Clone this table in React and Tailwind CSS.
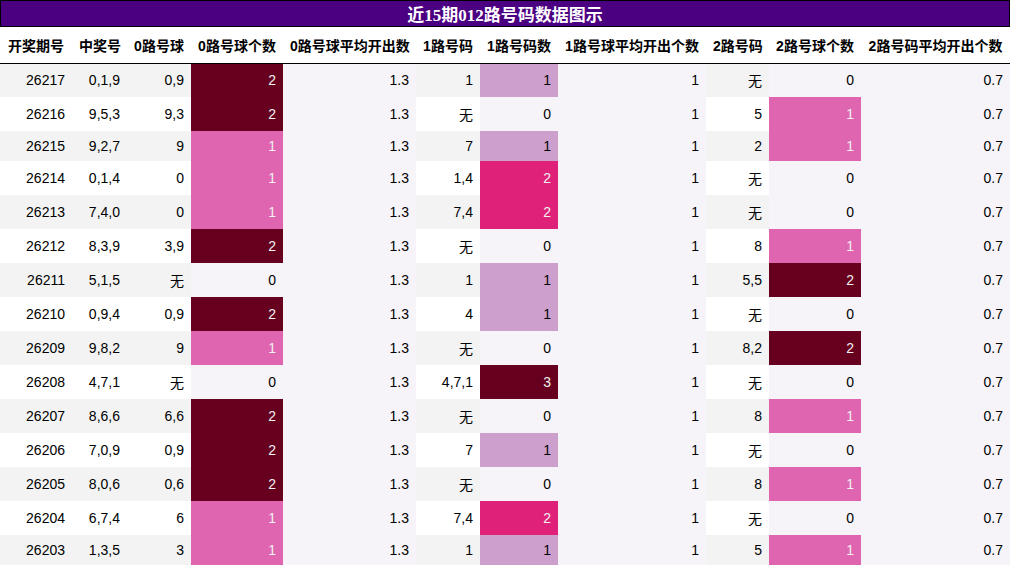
import React from 'react';

const columns = [
  { label: '开奖期号', width: 'w-[72px]' },
  { label: '中奖号', width: 'w-[55px]' },
  { label: '0路号球', width: 'w-[64px]' },
  { label: '0路号球个数', width: 'w-[92px]' },
  { label: '0路号球平均开出数', width: 'w-[133px]' },
  { label: '1路号码', width: 'w-[64px]' },
  { label: '1路号码数', width: 'w-[78px]' },
  { label: '1路号球平均开出个数', width: 'w-[148px]' },
  { label: '2路号码', width: 'w-[63px]' },
  { label: '2路号球个数', width: 'w-[92px]' },
  { label: '2路号码平均开出个数', width: 'w-[149px]' },
];

// 期号, 中奖号, 0路号球, 0路个数, 1路号码, 1路个数, 2路号码, 2路个数
const rows = [
  ['26217', '0,1,9', '0,9', 2, '1', 1, '无', 0],
  ['26216', '9,5,3', '9,3', 2, '无', 0, '5', 1],
  ['26215', '9,2,7', '9', 1, '7', 1, '2', 1],
  ['26214', '0,1,4', '0', 1, '1,4', 2, '无', 0],
  ['26213', '7,4,0', '0', 1, '7,4', 2, '无', 0],
  ['26212', '8,3,9', '3,9', 2, '无', 0, '8', 1],
  ['26211', '5,1,5', '无', 0, '1', 1, '5,5', 2],
  ['26210', '0,9,4', '0,9', 2, '4', 1, '无', 0],
  ['26209', '9,8,2', '9', 1, '无', 0, '8,2', 2],
  ['26208', '4,7,1', '无', 0, '4,7,1', 3, '无', 0],
  ['26207', '8,6,6', '6,6', 2, '无', 0, '8', 1],
  ['26206', '7,0,9', '0,9', 2, '7', 1, '无', 0],
  ['26205', '8,0,6', '0,6', 2, '无', 0, '8', 1],
  ['26204', '6,7,4', '6', 1, '7,4', 2, '无', 0],
  ['26203', '1,3,5', '3', 1, '1', 1, '5', 1],
];

// PuRd scale, max 2
function twoScale(n) {
  const map = {
    0: 'bg-[#f7f4f9] text-black',
    1: 'bg-[#df65b0] text-[#f1f1f1]',
    2: 'bg-[#67001f] text-[#f1f1f1]',
  };
  return map[n];
}

// PuRd scale, max 3
function threeScale(n) {
  const map = {
    0: 'bg-[#f7f4f9] text-black',
    1: 'bg-[#cd9fcc] text-black',
    2: 'bg-[#df2179] text-[#f1f1f1]',
    3: 'bg-[#67001f] text-[#f1f1f1]',
  };
  return map[n];
}

const flat = 'bg-[#f7f4f9] text-black';

export default function App() {
  return (
    <div className="w-[1010px] bg-white font-['Liberation_Sans','Noto_Sans_CJK_SC',sans-serif] text-[14px] leading-[normal] text-black">
      <div className="flex h-[27px] items-center justify-center border border-black bg-[#4b0082] font-['Liberation_Serif','Noto_Sans_CJK_SC',serif] text-[17px] font-bold text-white">
        近15期012路号码数据图示
      </div>
      <table className="w-[1010px] table-fixed border-collapse">
        <thead>
          <tr className="h-[36px] border-b border-black">
            {columns.map((col) => (
              <th key={col.label} className={`${col.width} px-[7px] text-center font-bold whitespace-nowrap`}>
                {col.label}
              </th>
            ))}
          </tr>
        </thead>
        <tbody>
          {rows.map((row, i) => {
            const [issue, win, zero, zeroN, one, oneN, two, twoN] = row;
            const tall = row.includes('无');
            const base = i % 2 === 0 ? 'bg-[#f3f3f3]' : 'bg-white';
            const cell = 'px-[7px] text-right align-middle whitespace-nowrap';
            return (
              <tr key={issue} className={tall ? 'h-[34px]' : 'h-[30px]'}>
                <td className={`${cell} ${base}`}>{issue}</td>
                <td className={`${cell} ${base}`}>{win}</td>
                <td className={`${cell} ${base}`}>{zero}</td>
                <td className={`${cell} ${twoScale(zeroN)}`}>{zeroN}</td>
                <td className={`${cell} ${flat}`}>1.3</td>
                <td className={`${cell} ${base}`}>{one}</td>
                <td className={`${cell} ${threeScale(oneN)}`}>{oneN}</td>
                <td className={`${cell} ${flat}`}>1</td>
                <td className={`${cell} ${base}`}>{two}</td>
                <td className={`${cell} ${twoScale(twoN)}`}>{twoN}</td>
                <td className={`${cell} ${flat}`}>0.7</td>
              </tr>
            );
          })}
        </tbody>
      </table>
    </div>
  );
}
